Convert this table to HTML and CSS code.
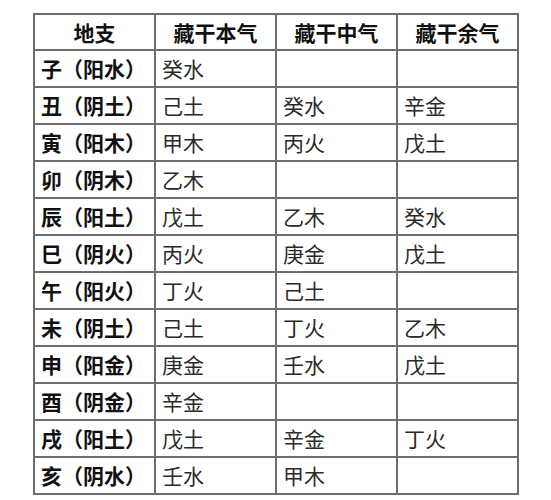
FILE: index.html
```html
<!DOCTYPE html>
<html lang="zh">
<head>
<meta charset="utf-8">
<link rel="stylesheet" href="styles.css">
</head>
<body>
<table class="tbl">
  <thead>
    <tr><th>地支</th><th>藏干本气</th><th>藏干中气</th><th>藏干余气</th></tr>
  </thead>
  <tbody>
    <tr><td class="b">子（阳水）</td><td>癸水</td><td></td><td></td></tr>
    <tr><td class="b">丑（阴土）</td><td>己土</td><td>癸水</td><td>辛金</td></tr>
    <tr><td class="b">寅（阳木）</td><td>甲木</td><td>丙火</td><td>戊土</td></tr>
    <tr><td class="b">卯（阴木）</td><td>乙木</td><td></td><td></td></tr>
    <tr><td class="b">辰（阳土）</td><td>戊土</td><td>乙木</td><td>癸水</td></tr>
    <tr><td class="b">巳（阴火）</td><td>丙火</td><td>庚金</td><td>戊土</td></tr>
    <tr><td class="b">午（阳火）</td><td>丁火</td><td>己土</td><td></td></tr>
    <tr><td class="b">未（阴土）</td><td>己土</td><td>丁火</td><td>乙木</td></tr>
    <tr><td class="b">申（阳金）</td><td>庚金</td><td>壬水</td><td>戊土</td></tr>
    <tr><td class="b">酉（阴金）</td><td>辛金</td><td></td><td></td></tr>
    <tr><td class="b">戌（阳土）</td><td>戊土</td><td>辛金</td><td>丁火</td></tr>
    <tr><td class="b">亥（阴水）</td><td>壬水</td><td>甲木</td><td></td></tr>
  </tbody>
</table>
</body>
</html>
```
FILE: styles.css
```css
html, body {
  margin: 0;
  padding: 0;
  background: #ffffff;
}
body {
  padding: 13px 0 0 33px;
  font-family: "Noto Sans CJK SC", "Noto Sans", sans-serif;
}
.tbl {
  border-collapse: collapse;
  table-layout: fixed;
  width: 486px;
}
.tbl th, .tbl td {
  border: 2px solid #6e6e6e;
  height: 35px;
  padding: 0 0 0 6px;
  font-size: 21px;
  line-height: 35px;
  color: #2a2a2a;
  text-align: left;
  vertical-align: middle;
  white-space: nowrap;
  overflow: hidden;
}
.tbl th {
  height: 34px;
  line-height: 34px;
  text-align: center;
  padding: 0;
  font-weight: 700;
  color: #111;
}
.tbl td.b {
  font-weight: 700;
  color: #111;
}
```
